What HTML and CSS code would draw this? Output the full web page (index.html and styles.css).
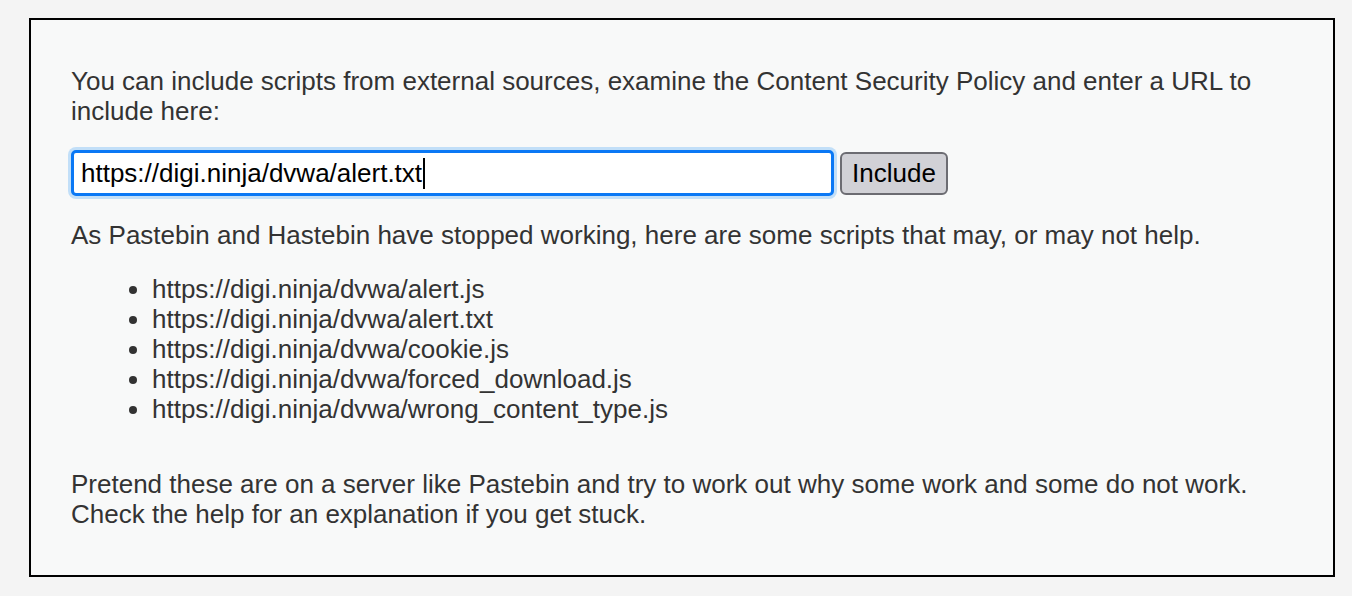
FILE: index.html
```html
<!DOCTYPE html>
<html>
<head>
<meta charset="utf-8">
<link rel="stylesheet" href="styles.css">
</head>
<body>
<div class="box">
  <p class="para">You can include scripts from external sources, examine the Content Security Policy and enter a URL to include here:</p>
  <form class="include-form">
    <div class="field"><span class="field-text">https://digi.ninja/dvwa/alert.txt</span><span class="caret"></span></div>
    <button type="button" class="btn">Include</button>
  </form>
  <p class="para para-note">As Pastebin and Hastebin have stopped working, here are some scripts that may, or may not help.</p>
  <ul class="scripts">
    <li>https://digi.ninja/dvwa/alert.js</li>
    <li>https://digi.ninja/dvwa/alert.txt</li>
    <li>https://digi.ninja/dvwa/cookie.js</li>
    <li>https://digi.ninja/dvwa/forced_download.js</li>
    <li>https://digi.ninja/dvwa/wrong_content_type.js</li>
  </ul>
  <p class="para para-end">Pretend these are on a server like Pastebin and try to work out why some work and some do not work. Check the help for an explanation if you get stuck.</p>
</div>
</body>
</html>
```

FILE: styles.css
```css
html, body {
  margin: 0;
  padding: 0;
  background: #f4f4f4;
}
body {
  padding: 18px 17px 19px 29px;
  font-family: "Liberation Sans", Arial, sans-serif;
  font-size: 26px;
  line-height: 30px;
  color: #333333;
}
.box {
  box-sizing: border-box;
  height: 559px;
  border: 2px solid #000000;
  background: #f8f9f9;
  padding: 46px 40px 0 40px;
}
.para {
  margin: 0;
}
.include-form {
  display: flex;
  align-items: center;
  gap: 6px;
  margin: 24px 0 0 0;
}
.field {
  box-sizing: border-box;
  width: 763px;
  height: 46px;
  border: 3px solid #0a78f5;
  border-radius: 5px;
  background: #ffffff;
  box-shadow: 0 0 0 3px #c2dff8;
  display: flex;
  align-items: center;
  padding-left: 7px;
  color: #000000;
}
.caret {
  display: inline-block;
  width: 2px;
  height: 31px;
  background: #000000;
  margin-left: 1px;
}
.btn {
  box-sizing: border-box;
  width: 108px;
  height: 43px;
  border: 2px solid #6c6c72;
  border-radius: 6px;
  background: #d1d1d6;
  font-family: "Liberation Sans", Arial, sans-serif;
  font-size: 26px;
  line-height: 30px;
  color: #000000;
  padding: 0;
}
.para-note {
  margin-top: 24px;
}
.scripts {
  margin: 24px 0 0 0;
  padding-left: 81px;
}
.para-end {
  margin-top: 45px;
}
```
